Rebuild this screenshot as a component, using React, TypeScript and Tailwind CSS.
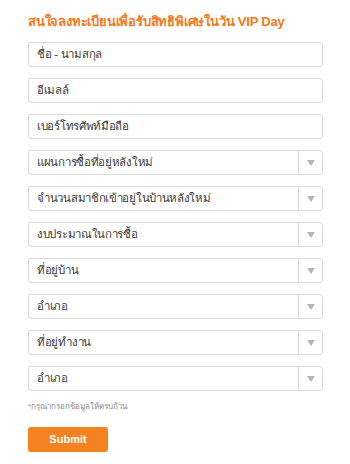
import React from 'react'

// ── Form fields ───────────────────────────────────────────────────────────────

const textFields = ['ชื่อ - นามสกุล', 'อีเมลล์', 'เบอร์โทรศัพท์มือถือ']

const selectFields = [
  'แผนการซื้อที่อยู่หลังใหม่',
  'จำนวนสมาชิกเข้าอยู่ในบ้านหลังใหม่',
  'งบประมาณในการซื้อ',
  'ที่อยู่บ้าน',
  'อำเภอ',
  'ที่อยู่ทำงาน',
  'อำเภอ',
]

function Caret() {
  return (
    <svg width="8" height="6" viewBox="0 0 8 6" className="fill-[#b5b5b5]">
      <path d="M0 0h8L4 6z" />
    </svg>
  )
}

export default function App() {
  return (
    <div className="w-[350px] h-[464px] bg-white font-['Liberation_Sans',sans-serif]">
      <div className="pl-[28px] pr-[27px] pt-[14px]">
        <h2 className="text-[13px] leading-[16px] font-bold text-[#f47920] tracking-[-0.2px]">
          สนใจลงทะเบียนเพื่อรับสิทธิพิเศษในวัน VIP Day
        </h2>

        <div className="mt-[12px] flex flex-col gap-[11px]">
          {textFields.map((label) => (
            <div
              key={label}
              className="h-[25px] flex items-center px-[8px] border border-[#d9d9d9] rounded-[3px] text-[11.5px] tracking-[-0.3px] text-[#3a3a3a]"
            >
              {label}
            </div>
          ))}
          {selectFields.map((label, i) => (
            <div
              key={i}
              className="h-[25px] flex items-stretch border border-[#d9d9d9] rounded-[3px] text-[11.5px] tracking-[-0.3px] text-[#3a3a3a]"
            >
              <span className="flex-1 flex items-center px-[8px]">{label}</span>
              <span className="w-[24px] flex items-center justify-center border-l border-[#d9d9d9]">
                <Caret />
              </span>
            </div>
          ))}
        </div>

        <p className="mt-[11px] text-[8px] leading-[10px] text-[#8a8a8a]">*กรุณากรอกข้อมูลให้ครบถ้วน</p>

        <button className="mt-[15px] w-[80px] h-[25px] rounded-[3px] bg-[#f58220] text-white text-[11px] font-semibold">
          Submit
        </button>
      </div>
    </div>
  )
}
